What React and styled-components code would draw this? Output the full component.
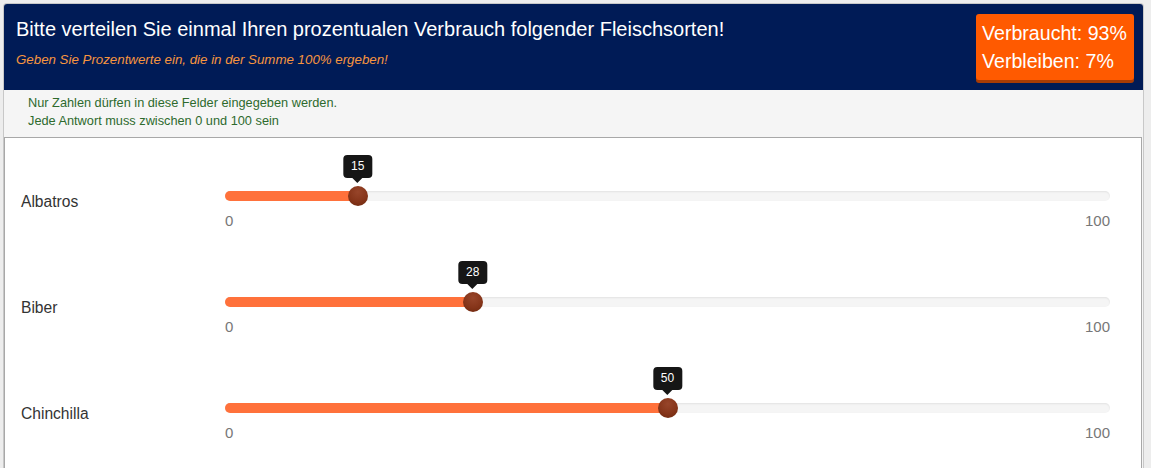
import React from "react";
import styled, { createGlobalStyle } from "styled-components";

const GlobalStyle = createGlobalStyle`
  html, body { margin: 0; padding: 0; }
  body {
    background: #ededed;
    font-family: "Liberation Sans", Arial, sans-serif;
  }
`;

const Page = styled.div`
  padding: 3px 7px 0 3px;
`;

const Card = styled.div`
  border: 1px solid #c8c8c8;
  border-bottom: none;
  border-radius: 4px 4px 0 0;
  background: #f5f5f5;
  overflow: hidden;
`;

const Header = styled.header`
  background: #001b56;
  height: 86px;
  display: flex;
  justify-content: space-between;
  align-items: flex-start;
  padding: 0 9px 0 12px;
  box-sizing: border-box;
`;

const Titles = styled.div`
  padding-top: 13px;
`;

const Title = styled.h1`
  margin: 0;
  color: #ffffff;
  font-size: 20px;
  font-weight: normal;
  line-height: 24px;
`;

const Subtitle = styled.p`
  margin: 11px 0 0;
  color: #f7953f;
  font-size: 13.3px;
  font-style: italic;
  line-height: 16px;
`;

const Badge = styled.div`
  margin-top: 10px;
  width: 158px;
  height: 66px;
  box-sizing: border-box;
  background: #ff5a00;
  border-radius: 3px;
  box-shadow: 0 3px 0 #a83c05;
  color: #ffffff;
  font-size: 19.6px;
  line-height: 28px;
  padding: 5px 0 0 6px;
  white-space: nowrap;
`;

const Info = styled.div`
  padding: 4px 24px 4px;
  height: 47px;
  box-sizing: border-box;
  color: #2d6a2d;
  font-size: 12.75px;
  line-height: 18px;
`;

const Content = styled.div`
  background: #ffffff;
  border: 1px solid #a8a8a8;
  border-bottom: none;
  margin: 0 1px 0 0;
  padding-bottom: 30px;
`;

const Row = styled.div`
  display: grid;
  grid-template-columns: 204px 1fr;
  padding: 53px 31px 15px 16px;
  height: 106px;
  box-sizing: border-box;
`;

const Label = styled.div`
  color: #333333;
  font-size: 15.6px;
  line-height: 17px;
  margin-top: 2px;
`;

const SliderBox = styled.div`
  display: flex;
  flex-direction: column;
`;

const Track = styled.div`
  position: relative;
  height: 10px;
  border-radius: 5px;
  background: #f5f5f5;
  box-shadow: inset 0 1px 2px rgba(0, 0, 0, 0.08);
`;

const Fill = styled.div`
  position: absolute;
  left: 0;
  top: 0;
  bottom: 0;
  border-radius: 5px;
  background: #ff713b;
`;

const Handle = styled.div`
  position: absolute;
  top: -5px;
  width: 20px;
  height: 20px;
  margin-left: -10px;
  border-radius: 50%;
  background: radial-gradient(circle at 50% 30%, #97452a 0%, #86351a 55%, #6a260c 100%);
`;

const Tip = styled.div`
  position: absolute;
  bottom: 23px;
  transform: translateX(-50%);
  background: #161616;
  color: #ffffff;
  font-size: 12px;
  line-height: 15px;
  padding: 4px 8px;
  border-radius: 4px;
  white-space: nowrap;

  &::after {
    content: "";
    position: absolute;
    left: 50%;
    bottom: -5px;
    margin-left: -5px;
    border-left: 5px solid transparent;
    border-right: 5px solid transparent;
    border-top: 5px solid #161616;
  }
`;

const Scale = styled.div`
  display: flex;
  justify-content: space-between;
  margin-top: 11px;
  color: #777777;
  font-size: 15px;
  line-height: 17px;
`;

const items = [
  { name: "Albatros", value: 15 },
  { name: "Biber", value: 28 },
  { name: "Chinchilla", value: 50 },
];

function Slider({ value }) {
  return (
    <SliderBox>
      <Track>
        <Fill style={{ width: `${value}%` }} />
        <Tip style={{ left: `${value}%` }}>{value}</Tip>
        <Handle style={{ left: `${value}%` }} />
      </Track>
      <Scale>
        <span>0</span>
        <span>100</span>
      </Scale>
    </SliderBox>
  );
}

export default function App() {
  return (
    <>
      <GlobalStyle />
      <Page>
        <Card>
          <Header>
            <Titles>
              <Title>Bitte verteilen Sie einmal Ihren prozentualen Verbrauch folgender Fleischsorten!</Title>
              <Subtitle>Geben Sie Prozentwerte ein, die in der Summe 100% ergeben!</Subtitle>
            </Titles>
            <Badge>
              Verbraucht: 93%
              <br />
              Verbleiben: 7%
            </Badge>
          </Header>
          <Info>
            Nur Zahlen dürfen in diese Felder eingegeben werden.
            <br />
            Jede Antwort muss zwischen 0 und 100 sein
          </Info>
          <Content>
            {items.map((it) => (
              <Row key={it.name}>
                <Label>{it.name}</Label>
                <Slider value={it.value} />
              </Row>
            ))}
          </Content>
        </Card>
      </Page>
    </>
  );
}
